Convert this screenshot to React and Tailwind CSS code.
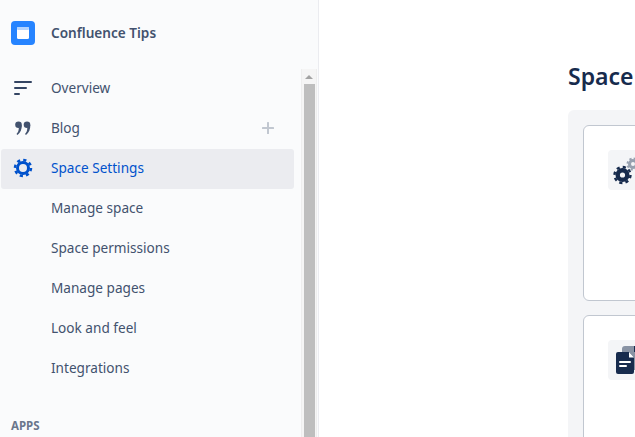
const SUB_ITEMS = ['Manage space', 'Space permissions', 'Manage pages', 'Look and feel', 'Integrations']

function NavRow({ icon, label, active, children }) {
  return (
    <div className={`flex items-center h-10 rounded-[3px] ml-px w-[293px] ${active ? 'bg-[#EBECF0] text-[#0052CC] pb-[2px]' : 'text-[#42526E]'}`}>
      <div className="w-[50px] flex items-center justify-center pr-[6px]">{icon}</div>
      <span className="text-[13.6px] flex-1">{label}</span>
      {children}
    </div>
  )
}

function GearsIcon() {
  return (
    <svg width="40" height="40" viewBox="0 0 40 40">
      <g transform="translate(25 14)" fill="none" stroke="#97A0AF">
        <circle r="3.500" strokeWidth="3" />
        <circle r="5.500" strokeWidth="2" strokeDasharray="2.200 2.120" />
      </g>
      <g transform="translate(14.500 25)" fill="none" stroke="#172B4D">
        <circle r="4.800" strokeWidth="4.400" />
        <circle r="8" strokeWidth="2.400" strokeDasharray="3.200 3.080" />
      </g>
    </svg>
  )
}

function PagesIcon() {
  return (
    <svg width="40" height="40" viewBox="0 0 40 40">
      <rect x="14" y="6" width="24" height="24" rx="3" fill="#8993A4" />
      <rect x="26" y="6" width="6" height="6" fill="#172B4D" />
      <path d="M10 12h11l5 5.500V32a2 2 0 0 1-2 2H10a2 2 0 0 1-2-2V14a2 2 0 0 1 2-2z" fill="#172B4D" />
      <path d="M21 12l5 5.500h-5z" fill="#fff" />
      <rect x="11" y="21" width="12" height="2" rx="1" fill="#fff" />
      <rect x="11" y="25" width="8" height="2" rx="1" fill="#fff" />
    </svg>
  )
}

export default function App() {
  return (
    <div className="flex w-[635px] h-[437px] overflow-hidden bg-white font-['Noto_Sans','Liberation_Sans',sans-serif]">
      <div className="flex w-[319px] shrink-0 bg-[#FAFBFC] border-r border-[#EBECF0]">
        <div className="w-[301px] shrink-0">
          <div className="flex items-center h-[66px] pl-[11px]">
            <div className="w-6 h-6 rounded-[4px] bg-[#2684FF] flex items-center justify-center">
              <svg width="12" height="12" viewBox="0 0 12 12">
                <rect width="12" height="12" rx="1.500" fill="#fff" />
                <rect width="12" height="3" rx="1" fill="#B3D4FF" />
              </svg>
            </div>
            <span className="ml-4 text-[13.6px] font-semibold text-[#42526E]">Confluence Tips</span>
          </div>
          <div className="mt-[2px]">
            <NavRow
              label="Overview"
              icon={
                <svg width="18" height="14" viewBox="0 0 18 14" fill="#344563">
                  <rect y="0" width="18" height="2" rx="1" />
                  <rect y="6" width="13" height="2" rx="1" />
                  <rect y="12" width="6" height="2" rx="1" />
                </svg>
              }
            />
            <NavRow
              label="Blog"
              icon={
                <svg width="16" height="14" viewBox="0 0 16 14" fill="#42526E">
                  <circle cx="3.500" cy="3.800" r="3.300" />
                  <path d="M6.800 3.800C7 8 5.500 12 2.500 14L1.500 13C3 11.500 3.800 9.500 3.800 7z" />
                  <circle cx="12" cy="3.800" r="3.300" />
                  <path d="M15.300 3.800C15.500 8 14 12 11 14L10 13C11.500 11.500 12.300 9.500 12.300 7z" />
                </svg>
              }
            >
              <svg className="mr-[20px]" width="12" height="12" viewBox="0 0 12 12" fill="#C1C7D0">
                <rect x="5" width="2" height="12" rx="0.500" />
                <rect y="5" width="12" height="2" rx="0.500" />
              </svg>
            </NavRow>
            <div className="mt-px -mb-px">
              <NavRow
                active
                label="Space Settings"
                icon={
                  <svg width="20" height="20" viewBox="0 0 20 20" fill="none" stroke="#0052CC">
                    <circle cx="10" cy="10" r="5.500" strokeWidth="3" />
                    <circle cx="10" cy="10" r="8" strokeWidth="2.500" strokeDasharray="3.200 3.080" />
                  </svg>
                }
              />
            </div>
            {SUB_ITEMS.map(item => (
              <NavRow key={item} label={item} />
            ))}
          </div>
          <div className="mt-[30px] pl-[11px] text-[11.5px] font-bold text-[#6B778C] leading-4">APPS</div>
        </div>
        <div className="w-[16px] mt-[69px] flex flex-col items-center bg-[#F5F5F5] border-x border-[#EEEEEE]">
          <div className="h-[15px] flex items-center justify-center">
            <div className="w-0 h-0 border-x-4 border-x-transparent border-b-[4px] border-b-[#A3A3A3]" />
          </div>
          <div className="w-[11px] flex-1 bg-[#BEBEBE]" />
        </div>
      </div>
      <div className="pl-[249px] pt-[62px]">
        <h1 className="text-[23px] leading-7 font-semibold text-[#172B4D] whitespace-nowrap">Space settings</h1>
        <div className="mt-[20px] w-[600px] p-[15px] rounded-[6px] bg-[#F4F5F7] flex flex-col gap-[14px]">
          <div className="h-[176px] rounded-[6px] bg-white border border-[#C1C7D0] pl-6 pt-6 shrink-0">
            <div className="w-10 h-10 rounded-[4px] bg-[#F4F5F7]">
              <GearsIcon />
            </div>
          </div>
          <div className="h-[176px] rounded-[6px] bg-white border border-[#C1C7D0] pl-6 pt-6 shrink-0">
            <div className="w-10 h-10 rounded-[4px] bg-[#F4F5F7]">
              <PagesIcon />
            </div>
          </div>
        </div>
      </div>
    </div>
  )
}
